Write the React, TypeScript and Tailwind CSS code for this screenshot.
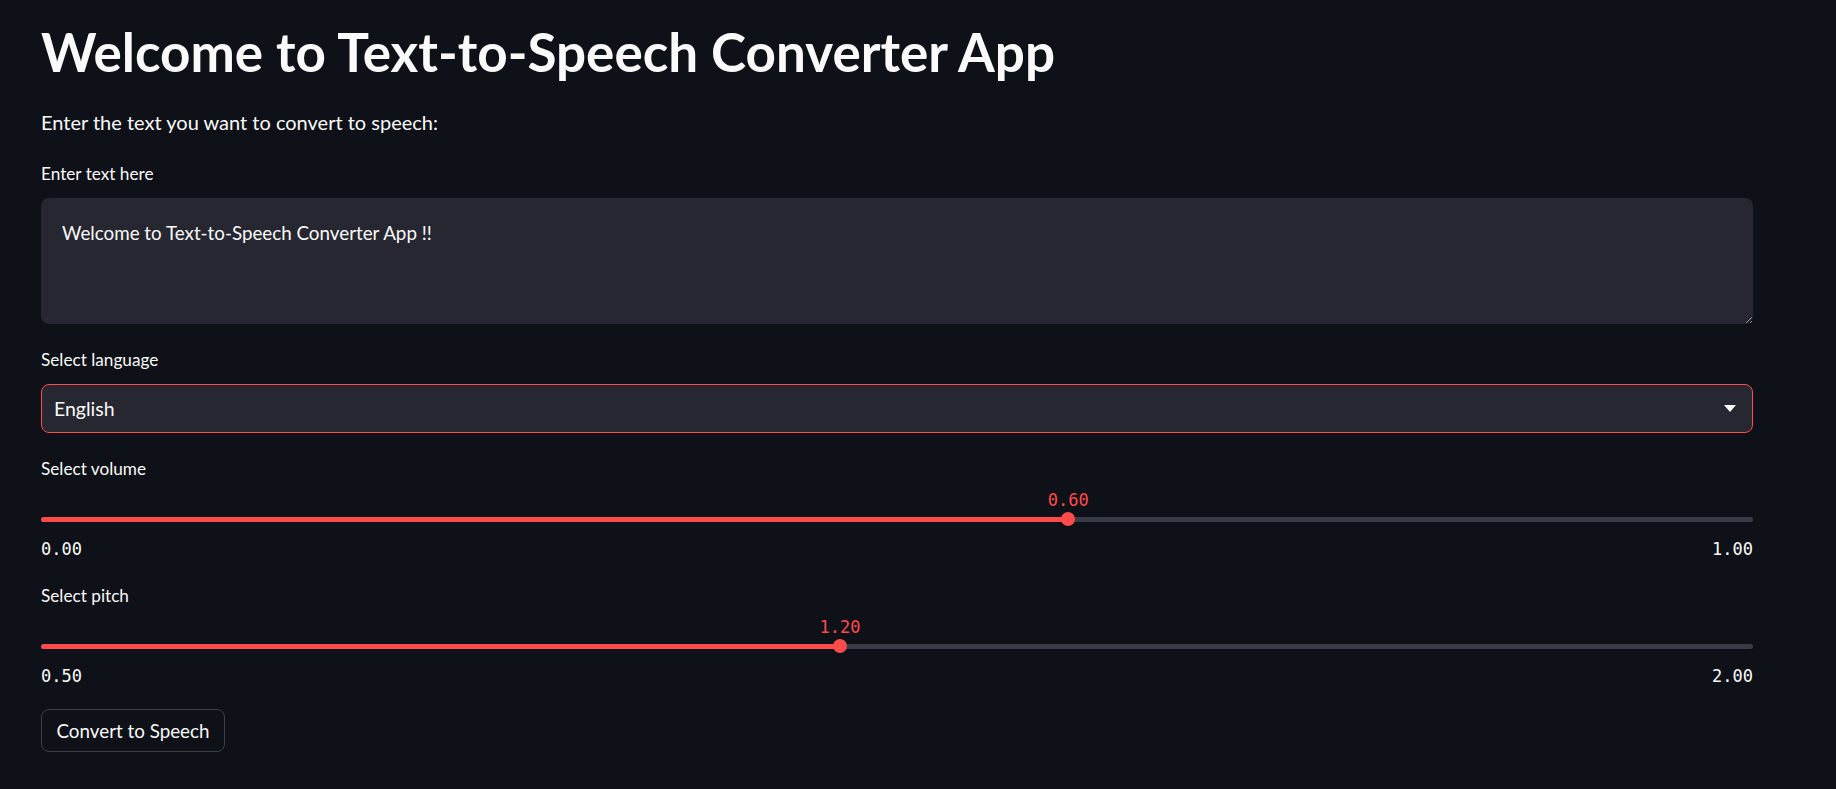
import { useState } from "react";

function Slider({ label, min, max, value }: { label: string; min: number; max: number; value: number }) {
    const pct = ((value - min) / (max - min)) * 100;

    return (
        <div className="flex flex-col">
            <div className="h-[24px] leading-[24px] text-[17.2px] mt-[24px]">{label}</div>
            <div className="relative h-[22px] mt-[8px] font-['DejaVu_Sans_Mono',monospace] text-[17px] leading-[22px] text-[#ff4b4b]">
                <span className="absolute top-0 -translate-x-1/2" style={{ left: `${pct}%` }}>
                    {value.toFixed(2)}
                </span>
            </div>
            <div className="relative h-[14px] mt-[1px] flex items-center">
                <div className="w-full h-[5px] rounded-full bg-[#393c45]" />
                <div className="absolute left-0 h-[5px] rounded-full bg-[#ff4b4b]" style={{ width: `${pct}%` }} />
                <div
                    className="absolute w-[14px] h-[14px] -translate-x-1/2 rounded-full bg-[#ff4b4b]"
                    style={{ left: `${pct}%` }}
                />
            </div>
            <div className="flex justify-between h-[22px] mt-[12px] font-['DejaVu_Sans_Mono',monospace] text-[17px] leading-[22px]">
                <span>{min.toFixed(2)}</span>
                <span>{max.toFixed(2)}</span>
            </div>
        </div>
    );
}

export default function App() {
    const [text, setText] = useState("Welcome to Text-to-Speech Converter App !!");

    return (
        <div className="min-h-screen bg-[#0e1117] text-[#fafafa] font-['Lato',sans-serif]">
            <div className="w-[1712px] ml-[41px] pt-[19px] flex flex-col">
                <h1 className="h-[66px] leading-[66px] text-[53px] font-bold">Welcome to Text-to-Speech Converter App</h1>
                <p className="h-[30px] leading-[30px] text-[20px] mt-[22px]">Enter the text you want to convert to speech:</p>

                <label className="h-[24px] leading-[24px] text-[17.2px] mt-[25px]">Enter text here</label>
                <textarea
                    value={text}
                    onChange={e => setText(e.target.value)}
                    className="mt-[12px] h-[126px] rounded-lg bg-[#262730] px-[21px] pt-[20px] text-[18.8px] leading-[30px] resize-y outline-none [color-scheme:dark]"
                />

                <label className="h-[24px] leading-[24px] text-[17.2px] mt-[24px]">Select language</label>
                <div className="mt-[12px] h-[49px] rounded-lg border border-[#ff4b4b] bg-[#262730] flex items-center justify-between pl-[12px] pr-[16px]">
                    <span className="text-[19.5px] leading-[30px]">English</span>
                    <svg width="12" height="7" viewBox="0 0 12 7">
                        <path d="M0 0 L12 0 L6 7 Z" fill="#fafafa" />
                    </svg>
                </div>

                <Slider label="Select volume" min={0} max={1} value={0.6} />
                <Slider label="Select pitch" min={0.5} max={2} value={1.2} />

                <div className="mt-[22px]">
                    <button className="h-[43px] px-[14.5px] rounded-lg border border-[#3d4047] bg-[#0e1117] text-[18.8px] leading-[30px]">
                        Convert to Speech
                    </button>
                </div>
            </div>
        </div>
    );
}
